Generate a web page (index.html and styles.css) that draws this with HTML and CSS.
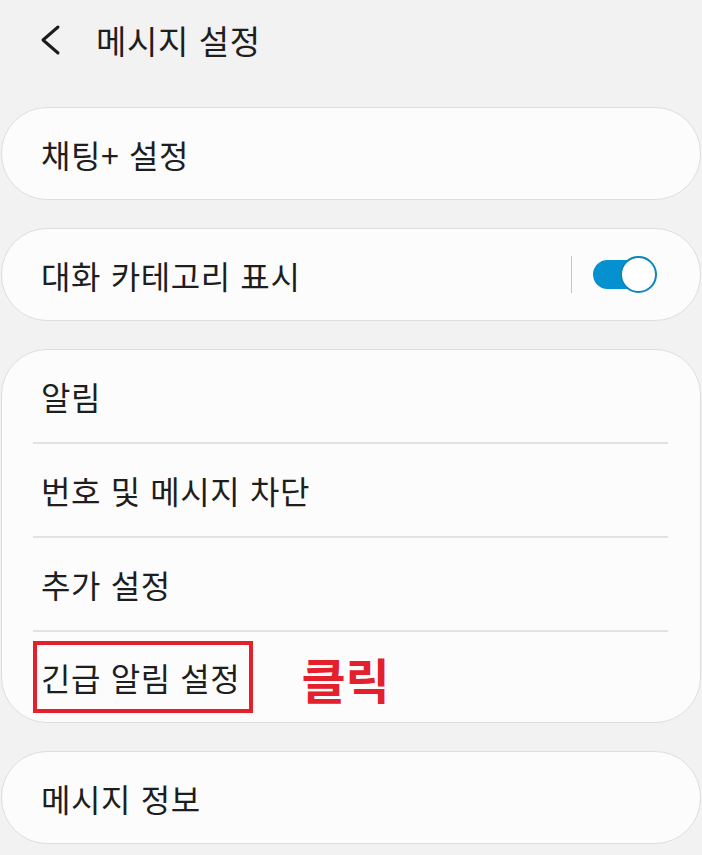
FILE: index.html
```html
<!DOCTYPE html>
<html lang="ko">
<head>
<meta charset="utf-8">
<title>메시지 설정</title>
<link rel="stylesheet" href="styles.css">
</head>
<body>
<header class="appbar">
  <svg class="back" width="22" height="34" viewBox="0 0 22 34" aria-hidden="true">
    <polyline points="18,3 3,16 18,29" fill="none" stroke="#1c1c1c" stroke-width="3" stroke-linecap="round" stroke-linejoin="round"/>
  </svg>
  <h1 class="title">메시지 설정</h1>
</header>
<main class="list">
  <section class="card">
    <div class="row"><span class="label">채팅+ 설정</span></div>
  </section>
  <section class="card">
    <div class="row row-switch">
      <span class="label">대화 카테고리 표시</span>
      <span class="vsep"></span>
      <span class="switch"><span class="knob"></span></span>
    </div>
  </section>
  <section class="card card-group">
    <div class="row"><span class="label">알림</span></div>
    <div class="divider"></div>
    <div class="row"><span class="label">번호 및 메시지 차단</span></div>
    <div class="divider"></div>
    <div class="row"><span class="label">추가 설정</span></div>
    <div class="divider"></div>
    <div class="row row-marked">
      <span class="marked"><span class="label">긴급 알림 설정</span></span>
      <span class="click">클릭</span>
    </div>
  </section>
  <section class="card">
    <div class="row"><span class="label">메시지 정보</span></div>
  </section>
</main>
</body>
</html>
```
FILE: styles.css
```css
html, body {
  margin: 0;
  padding: 0;
  background: #f2f2f2;
}
body {
  font-family: "Noto Sans CJK KR", "Noto Sans", sans-serif;
  color: #1e1e1e;
}
.appbar {
  height: 80px;
  display: flex;
  align-items: center;
  padding-left: 40px;
}
.back {
  display: block;
  margin-top: 1px;
}
.title {
  margin: 0 0 0 34px;
  font-size: 33px;
  font-weight: 400;
  letter-spacing: 0.6px;
  line-height: 40px;
}
.list {
  padding-top: 27px;
  display: flex;
  flex-direction: column;
  gap: 28px;
}
.card {
  margin: 0 1px;
  background: #fcfcfc;
  border: 1px solid #dedede;
  border-radius: 46px;
}
.row {
  height: 91px;
  display: flex;
  align-items: center;
  padding: 0 43px 0 39px;
}
.card-group .row {
  height: 92px;
}
.card-group .row-marked {
  height: 90px;
}
.label {
  font-size: 32px;
  letter-spacing: 0.6px;
  line-height: 40px;
  white-space: nowrap;
}
.row-switch .label {
  flex: 1;
}
.vsep {
  width: 1.5px;
  height: 37px;
  background: #c4c4c4;
  margin-right: 21px;
}
.switch {
  position: relative;
  width: 64px;
  height: 37px;
  display: block;
}
.switch::before {
  content: "";
  position: absolute;
  left: 0;
  top: 4px;
  width: 52px;
  height: 29px;
  border-radius: 15px;
  background: #0591cf;
}
.knob {
  position: absolute;
  right: 0;
  top: 0;
  width: 33px;
  height: 33px;
  border-radius: 50%;
  background: #fff;
  border: 2px solid #0a86bd;
}
.divider {
  height: 2px;
  margin: 0 32px 0 31px;
  background: #e2e2e2;
}
.row-marked {
  padding-left: 31px;
}
.marked {
  display: flex;
  align-items: center;
  box-sizing: border-box;
  height: 72px;
  border: 4px solid #e3202b;
  padding: 0 9px 0 4px;
}
.click {
  margin-left: 48px;
  margin-top: 2px;
  font-size: 48px;
  font-weight: 700;
  line-height: 50px;
  color: #e3202b;
}
```
